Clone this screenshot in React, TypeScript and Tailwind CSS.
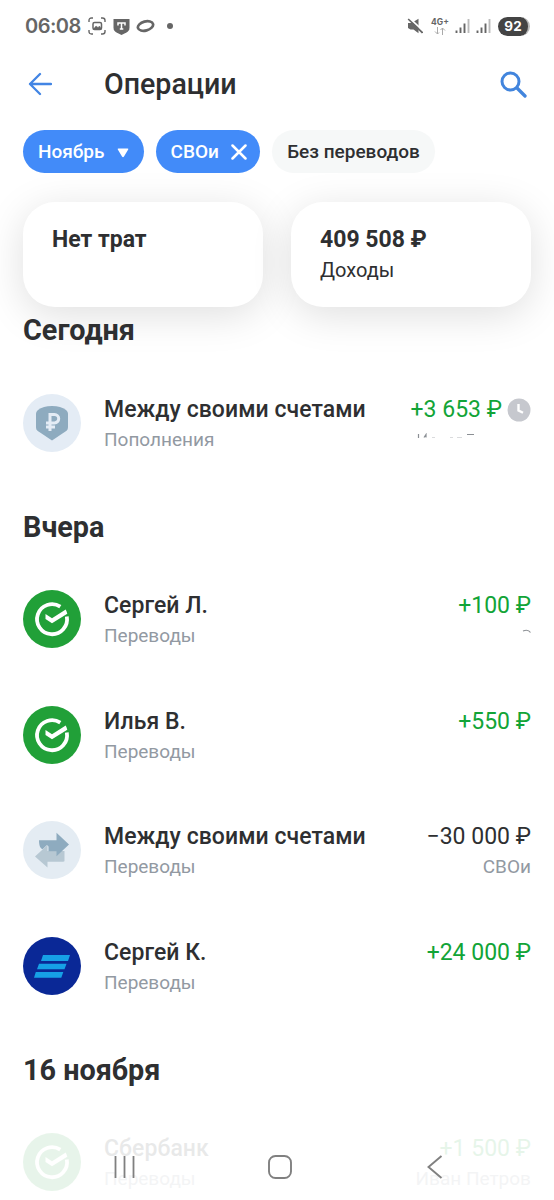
import type { ReactNode } from 'react';

type Operation = {
  title: string;
  category: string;
  amount: string;
  income: boolean;
  icon: ReactNode;
  note?: ReactNode;
  pending?: boolean;
  faded?: boolean;
};

const SberIcon = () => (
  <svg viewBox="0 0 58 58" className="h-[58px] w-[58px]" fill="none">
    <circle cx="29" cy="29" r="29" fill="#21a038" />
    <path d="M37.300 16.700A15 15 0 1 0 43.800 26.500" stroke="#fff" strokeWidth="3.800" />
    <path d="M22.500 24v5l6.500 4.300 15.300-9.600q-.6-2.300-1.600-4.200L29 28.300z" fill="#fff" />
  </svg>
);

const RubleIcon = () => (
  <svg viewBox="0 0 58 58" className="h-[58px] w-[58px]" fill="none">
    <circle cx="29" cy="29" r="29" fill="#e4ecf5" />
    <path d="M29 12c6 0 10.500 1.500 14 4 1.500 1.200 2 2.500 2 4v13c0 2-.6 3.200-2.200 4.300L29 46.500l-13.800-9.200C13.600 36.200 13 35 13 33V20c0-1.500.5-2.800 2-4 3.500-2.500 8-4 14-4z" fill="#8eabbf" />
    <path d="M27 37V20.500h4.500a4.200 4.200 0 0 1 0 8.400H23M23 32.900h9" stroke="#e4ecf5" strokeWidth="3" />
  </svg>
);

const ExchangeIcon = () => (
  <svg viewBox="0 0 58 58" className="h-[58px] w-[58px]">
    <circle cx="29" cy="29" r="29" fill="#e4ecf3" />
    <path d="M12 35.500 24.500 24v6h17v9.500c0 .8-.4 1.200-1.200 1.200H24.500V46.500z" fill="#b7c8d3" />
    <path d="M16 19.200h17.500v-7.500L46 23.500 33.500 35.300v-5H25.500V25.500L24 24l-4.500 4.300c-2.500-1.500-3.500-4-3.500-9.100z" fill="#8eabbf" />
  </svg>
);

const VtbIcon = () => (
  <svg viewBox="0 0 58 58" className="h-[58px] w-[58px]">
    <circle cx="29" cy="29" r="29" fill="#0a2896" />
    <path d="M20 18h27l-2 6H18zM16 26.800h27.500l-2 5.500H14zM12.800 35h27.500l-2 5.700H11z" fill="#16a0e6" />
  </svg>
);

const sections: { title: string; items: Operation[] }[] = [
  {
    title: 'Сегодня',
    items: [
      {
        title: 'Между своими счетами',
        category: 'Пополнения',
        amount: '+3 653 ₽',
        income: true,
        icon: <RubleIcon />,
        pending: true,
        note: (
          <svg viewBox="0 0 114 8" className="h-2 w-[114px]" stroke="#8b8f94" fill="none">
            <path d="M1.500 1v4M7 4.500l2-3v3M50 1.500h7" strokeWidth="1.200" />
            <path d="M15 4.500h3M33 4.500h3M40 4.500h5" strokeWidth=".8" opacity=".4" />
          </svg>
        ),
      },
    ],
  },
  {
    title: 'Вчера',
    items: [
      {
        title: 'Сергей Л.',
        category: 'Переводы',
        amount: '+100 ₽',
        income: true,
        icon: <SberIcon />,
        note: (
          <svg viewBox="0 0 9 8" className="h-2 w-[9px]" stroke="#8b8f94" fill="none">
            <path d="M1 2c3-1.200 6-.8 7.500 1.500" strokeWidth="1.200" />
          </svg>
        ),
      },
      { title: 'Илья В.', category: 'Переводы', amount: '+550 ₽', income: true, icon: <SberIcon /> },
      {
        title: 'Между своими счетами',
        category: 'Переводы',
        amount: '−30 000 ₽',
        income: false,
        icon: <ExchangeIcon />,
        note: 'СВОи',
      },
      { title: 'Сергей К.', category: 'Переводы', amount: '+24 000 ₽', income: true, icon: <VtbIcon /> },
    ],
  },
  {
    title: '16 ноября',
    items: [
      {
        title: 'Сбербанк',
        category: 'Переводы',
        amount: '+1 500 ₽',
        income: true,
        icon: <SberIcon />,
        note: 'Иван Петров',
        faded: true,
      },
    ],
  },
];

function StatusBar() {
  return (
    <div className="flex h-[52px] shrink-0 items-center justify-between pr-6 pl-[25px] text-[#666]">
      <div className="flex items-center">
        <span className="w-[56px] text-[20px] font-semibold tracking-[-0.5px] whitespace-nowrap font-[Inter]">06:08</span>
        <svg viewBox="0 0 18 18" className="ml-[7px] h-[18px] w-[18px]" fill="none" stroke="currentColor">
          <path d="M1 5V3.500Q1 1 3.500 1H5M13 1h1.500Q17 1 17 3.500V5M17 13v1.500q0 2.500-2.500 2.500H13M5 17H3.500Q1 17 1 14.500V13" strokeWidth="1.400" />
          <rect x="5" y="5.500" width="8.500" height="7" rx="1.500" strokeWidth="1.500" />
          <path d="m5.500 12 2.500-3 2 1.500L11.500 9l2 3z" fill="currentColor" strokeWidth=".5" />
        </svg>
        <svg viewBox="0 0 17 17" className="ml-[7px] h-[17px] w-[17px]">
          <path d="M.5 1h16v8.500c0 3-1.500 4-3 5L8.500 17l-5-2.500c-1.500-1-3-2-3-5z" fill="currentColor" />
          <path d="M5 7.500V5h7v2.500M8.500 5v6M6.800 11h3.500" stroke="#fff" strokeWidth="1.500" fill="none" />
        </svg>
        <svg viewBox="0 0 20 14" className="ml-[6px] h-[14px] w-5" fill="none">
          <ellipse cx="9.500" cy="7" rx="7.800" ry="4.500" transform="rotate(-15 9.500 7)" stroke="currentColor" strokeWidth="2.700" />
        </svg>
        <span className="ml-[11px] h-1.5 w-1.5 rounded-full bg-[#666]" />
      </div>
      <div className="flex items-center">
        <svg viewBox="0 0 16 16" className="h-4 w-4" fill="currentColor">
          <path d="M1 5h3.500L11.500.8v14.400l-5-3.700H3.500L1 10z" />
          <path d="M2.500.2 16 12.800" stroke="#fff" strokeWidth="1.800" />
          <path d="M1.200 1 15.500 14.800" stroke="currentColor" strokeWidth="1.700" />
        </svg>
        <div className="ml-[8px] flex w-[18px] flex-col items-center">
          <span className="text-[8.500px] leading-[9px] font-bold font-[Inter]">4G+</span>
          <svg viewBox="0 0 12 8" className="h-2 w-3" fill="none" stroke="#aaa">
            <path d="M3.500 0v7M1 4.500 3.500 7 5 5.500M8.500 8V1M6.500 3l2-2L11 3.500" />
          </svg>
        </div>
        {[0, 1].map((n) => (
          <svg key={n} viewBox="0 0 15 16" className="ml-[6px] h-4 w-[15px]" fill="none" strokeWidth="1.900">
            <path d="M1.500 12.500V15M5.500 9.500V15M9.500 5.500V15" stroke="currentColor" />
            <path d="M13.500 1v14" stroke="#bbb" />
          </svg>
        ))}
        <span className="ml-[7px] flex h-[19px] w-[32px] items-center justify-center rounded-full border-r-2 border-[#bbb] bg-[#444] pt-px text-[13.500px] leading-none font-bold text-white font-[Inter]">
          92
        </span>
      </div>
    </div>
  );
}

function OperationRow({ op }: { op: Operation }) {
  return (
    <div className={`flex h-[115.500px] items-center pr-[23px] pl-[23px] ${op.faded ? 'opacity-10' : ''}`}>
      {op.icon}
      <div className="ml-[23px] flex-1 pt-[4px]">
        <div className="text-[23px] leading-[30px] font-medium tracking-[0.05px] whitespace-nowrap">{op.title}</div>
        <div className="text-[19px] leading-[30px] text-[#9299a2] whitespace-nowrap">{op.category}</div>
      </div>
      <div className="flex flex-col items-end pt-[4px] whitespace-nowrap">
        <div className={`flex items-center text-[23px] leading-[30px] ${op.income ? 'text-[#12a437]' : ''}`}>
          {op.amount}
          {op.pending && (
            <svg viewBox="0 0 24 24" className="ml-[5px] h-6 w-6" fill="none">
              <circle cx="12" cy="12" r="11.500" fill="#c6c8ce" />
              <path d="M11.500 6v6.500l4.500 2.300" stroke="#fff" strokeWidth="2.400" />
            </svg>
          )}
        </div>
        <div className="flex h-[30px] items-start text-[19px] leading-[30px] text-[#9299a2]">
          {typeof op.note === 'string' ? op.note : <span className="pt-[8px] leading-none">{op.note}</span>}
        </div>
      </div>
    </div>
  );
}

export default function App() {
  return (
    <div className="relative flex h-[1200px] w-[554px] flex-col overflow-hidden bg-white text-[#2e2f31] font-[Roboto,sans-serif]">
      <StatusBar />

      {/* Header */}
      <header className="flex h-[64px] shrink-0 items-center px-[28px]">
        <svg viewBox="0 0 24 24" className="h-6 w-6" fill="none" stroke="#4285e4" strokeWidth="2.300" strokeLinecap="round" strokeLinejoin="round">
          <path d="M23 12H2M12 2 2 12l10 10" />
        </svg>
        <h1 className="ml-[52px] flex-1 text-[28.600px] font-medium">Операции</h1>
        <svg viewBox="0 0 27 27" className="-mr-[1px] h-[27px] w-[27px]" fill="none" stroke="#4285dd" strokeLinecap="round">
          <circle cx="10.500" cy="10.500" r="8.500" strokeWidth="3" />
          <path d="m17 17 8 8" strokeWidth="3.300" />
        </svg>
      </header>

      {/* Filters */}
      <div className="mt-[14px] flex h-[43px] shrink-0 gap-3 px-[23px] text-[19px] font-medium whitespace-nowrap">
        <div className="flex w-[120.500px] items-center justify-between rounded-full bg-[#428bf9] px-[15px] text-white">
          <span className="pt-px">Ноябрь</span>
          <svg viewBox="0 0 12 10" className="mt-[2px] h-[10px] w-3" fill="#fff">
            <path d="M1.500.5h9q1.300 0 .7 1L7 8.500q-1 1.500-2 0L.8 1.500q-.6-1 .7-1z" />
          </svg>
        </div>
        <div className="flex w-[104.500px] items-center justify-between rounded-full bg-[#428bf9] pr-[13px] pl-[15px] text-white">
          <span className="pt-px">СВОи</span>
          <svg viewBox="0 0 16 16" className="h-4 w-4" stroke="#fff" strokeWidth="2.500" strokeLinecap="round">
            <path d="m1.500 1.500 13 13m0-13-13 13" />
          </svg>
        </div>
        <div className="flex w-[163px] items-center justify-center rounded-full bg-[#f6f8f8] pt-px">Без переводов</div>
      </div>

      {/* Summary */}
      <div className="mt-[29px] flex shrink-0 gap-[28px] px-[23px]">
        <div className="h-[105px] flex-1 rounded-[32px] bg-white px-[29px] pt-[23px] shadow-[0_8px_40px_rgba(0,0,0,0.13)]">
          <div className="text-[23px] leading-[30px] font-bold">Нет трат</div>
        </div>
        <div className="h-[105px] flex-1 rounded-[32px] bg-white px-[29px] pt-[23px] shadow-[0_8px_40px_rgba(0,0,0,0.13)]">
          <div className="text-[23px] leading-[30px] font-bold">409 508 ₽</div>
          <div className="text-[20px] leading-[31px]">Доходы</div>
        </div>
      </div>

      {/* Operations */}
      <div className="-mt-[23px] shrink-0">
        {sections.map((section) => (
          <section key={section.title}>
            <h2 className="relative h-[81px] pt-[26px] pl-[23px] text-[28.800px] leading-[40px] font-bold">{section.title}</h2>
            {section.items.map((op, i) => (
              <OperationRow key={i} op={op} />
            ))}
          </section>
        ))}
      </div>

      {/* System navigation */}
      <nav className="absolute inset-x-0 bottom-0 flex h-[67px] items-center justify-between pr-[111px] pl-[113px]">
        <svg viewBox="0 0 22 22" className="h-[22px] w-[22px]" stroke="#808080" strokeWidth="1.800">
          <path d="M2.500 0v22M11.500 0v22M20.500 0v22" />
        </svg>
        <svg viewBox="0 0 24 24" className="-ml-[3px] h-6 w-6" fill="none" stroke="#808080" strokeWidth="1.900">
          <rect x="1" y="1" width="22" height="22" rx="6.500" />
        </svg>
        <svg viewBox="0 0 16 24" className="h-6 w-4" fill="none" stroke="#808080" strokeWidth="1.900">
          <path d="M14.500 1 1.500 12l13 11" />
        </svg>
      </nav>
    </div>
  );
}
